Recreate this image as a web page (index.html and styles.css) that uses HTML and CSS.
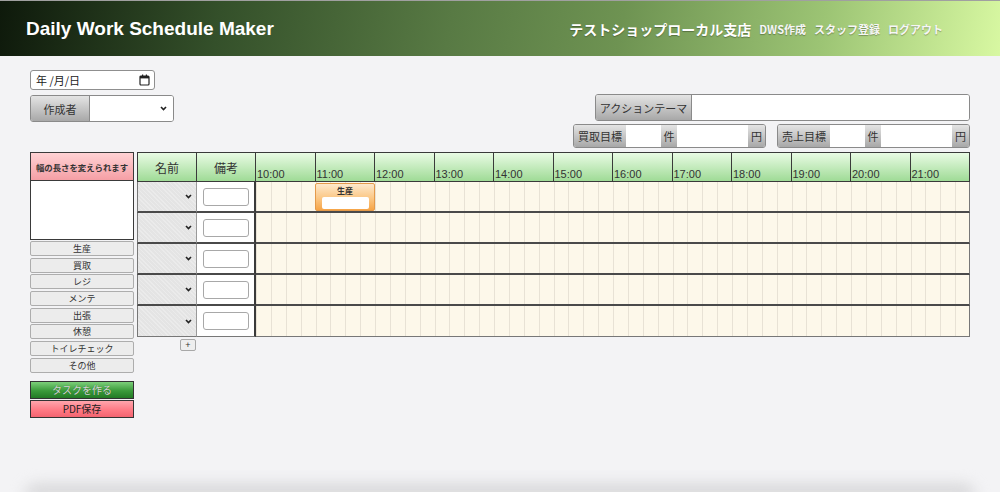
FILE: index.html
```html
<!DOCTYPE html>
<html lang="ja">
<head>
<meta charset="utf-8">
<title>Daily Work Schedule Maker</title>
<link rel="stylesheet" href="styles.css">
</head>
<body>
<div class="page">
  <header class="topbar">
    <h1 class="title">Daily Work Schedule Maker</h1>
    <nav class="nav">
      <span class="shop">テストショップローカル支店</span>
      <a class="nav-link" href="#">DWS作成</a>
      <a class="nav-link" href="#">スタッフ登録</a>
      <a class="nav-link" href="#">ログアウト</a>
    </nav>
  </header>

  <main class="content">
    <div class="controls">
      <div class="left-controls">
        <div class="date-field">
          <span>年 /月/日</span>
          <svg class="cal" width="11" height="12" viewBox="0 0 11 12"><rect x="1" y="2" width="9" height="9" rx="1" fill="none" stroke="#222" stroke-width="1.2"/><rect x="1" y="2" width="9" height="2.4" fill="#222"/><rect x="3" y="0.5" width="1.2" height="2" fill="#222"/><rect x="6.8" y="0.5" width="1.2" height="2" fill="#222"/></svg>
        </div>
        <div class="creator">
          <span class="tag creator-tag">作成者</span>
          <div class="select-box">
            <svg width="7" height="5" viewBox="0 0 7 5"><path d="M1 1 L3.5 3.6 L6 1" fill="none" stroke="#222" stroke-width="1.6"/></svg>
          </div>
        </div>
      </div>

      <div class="right-controls">
        <div class="theme">
          <span class="tag theme-tag">アクションテーマ</span>
          <div class="field"></div>
        </div>
        <div class="targets">
          <div class="target">
            <span class="tag t-label">買取目標</span>
            <div class="field t-count"></div>
            <span class="tag t-unit">件</span>
            <div class="field t-amount"></div>
            <span class="tag t-yen">円</span>
          </div>
          <div class="target">
            <span class="tag t-label">売上目標</span>
            <div class="field t-count"></div>
            <span class="tag t-unit">件</span>
            <div class="field t-amount"></div>
            <span class="tag t-yen">円</span>
          </div>
        </div>
      </div>
    </div>

    <div class="workspace">
      <aside class="palette">
        <div class="palette-head">幅の長さを変えられます</div>
        <div class="palette-area"></div>
        <div class="task-list">
          <div class="task-btn">生産</div>
          <div class="task-btn">買取</div>
          <div class="task-btn">レジ</div>
          <div class="task-btn">メンテ</div>
          <div class="task-btn">出張</div>
          <div class="task-btn">休憩</div>
          <div class="task-btn">トイレチェック</div>
          <div class="task-btn">その他</div>
        </div>
        <div class="actions">
          <div class="make-btn">タスクを作る</div>
          <div class="pdf-btn">PDF保存</div>
        </div>
      </aside>

      <section class="schedule">
        <div class="grid">
          <div class="hcell first">名前</div>
          <div class="hcell">備考</div>
          <div class="hcell hours">
            <div class="hour">10:00</div>
            <div class="hour">11:00</div>
            <div class="hour">12:00</div>
            <div class="hour">13:00</div>
            <div class="hour">14:00</div>
            <div class="hour">15:00</div>
            <div class="hour">16:00</div>
            <div class="hour">17:00</div>
            <div class="hour">18:00</div>
            <div class="hour">19:00</div>
            <div class="hour">20:00</div>
            <div class="hour last">21:00</div>
          </div>

          <div class="ncell"><svg width="7" height="5" viewBox="0 0 7 5"><path d="M1 1 L3.5 3.6 L6 1" fill="none" stroke="#222" stroke-width="1.6"/></svg></div>
          <div class="bcell"><div class="memo"></div></div>
          <div class="tcell">
            <div class="task-block"><span class="block-label">生産</span><div class="block-input"></div></div>
          </div>

          <div class="ncell"><svg width="7" height="5" viewBox="0 0 7 5"><path d="M1 1 L3.5 3.6 L6 1" fill="none" stroke="#222" stroke-width="1.6"/></svg></div>
          <div class="bcell"><div class="memo"></div></div>
          <div class="tcell"></div>

          <div class="ncell"><svg width="7" height="5" viewBox="0 0 7 5"><path d="M1 1 L3.5 3.6 L6 1" fill="none" stroke="#222" stroke-width="1.6"/></svg></div>
          <div class="bcell"><div class="memo"></div></div>
          <div class="tcell"></div>

          <div class="ncell"><svg width="7" height="5" viewBox="0 0 7 5"><path d="M1 1 L3.5 3.6 L6 1" fill="none" stroke="#222" stroke-width="1.6"/></svg></div>
          <div class="bcell"><div class="memo"></div></div>
          <div class="tcell"></div>

          <div class="ncell lastrow"><svg width="7" height="5" viewBox="0 0 7 5"><path d="M1 1 L3.5 3.6 L6 1" fill="none" stroke="#222" stroke-width="1.6"/></svg></div>
          <div class="bcell lastrow"><div class="memo"></div></div>
          <div class="tcell lastrow"></div>
        </div>
        <div class="add-row">+</div>
      </section>
    </div>
  </main>

  <div class="page-foot"></div>
</div>
</body>
</html>
```

FILE: styles.css
```css
* { box-sizing: border-box; }

body {
  margin: 0;
  background: #f3f3f5;
  font-family: "Liberation Sans", "Noto Sans CJK JP", sans-serif;
  color: #333;
}

.page {
  height: 492px;
  display: flex;
  flex-direction: column;
  overflow: hidden;
}

/* header */
.topbar {
  height: 56px;
  flex: none;
  display: flex;
  align-items: center;
  justify-content: space-between;
  padding: 0 57px 0 26px;
  border-top: 1px solid #a0a0a0;
  background: linear-gradient(100deg, #0e190b 0%, #34502a 22%, #587a44 45%, #6e9352 62%, #9cc474 82%, #d8f8a2 100%);
}

.title {
  margin: 0;
  font-family: "Liberation Sans", sans-serif;
  font-size: 19px;
  font-weight: bold;
  color: #fff;
}

.nav {
  display: flex;
  align-items: center;
  gap: 8px;
  font-family: "Noto Sans CJK JP", "Liberation Sans", sans-serif;
  font-weight: bold;
  color: #fff;
  text-shadow: 0 1px 1px rgba(0, 0, 0, 0.3);
}

.shop { font-size: 14px; }

.nav-link {
  font-size: 11px;
  color: #f6f6f6;
  text-decoration: none;
}

/* controls */
.content { padding: 14px 30px 0; }

.controls {
  display: flex;
  justify-content: space-between;
  align-items: flex-start;
}

.left-controls {
  display: flex;
  flex-direction: column;
  align-items: flex-start;
  gap: 5px;
}

.date-field {
  width: 125px;
  height: 20px;
  border: 1px solid #8f8f8f;
  border-radius: 3px;
  background: #fff;
  display: flex;
  align-items: center;
  justify-content: space-between;
  padding: 0 4px 0 5px;
  font-family: "Noto Sans CJK JP", sans-serif;
  font-size: 11px;
  color: #222;
}

.tag {
  background: linear-gradient(#e4e4e4, #a8a8a8);
  display: flex;
  align-items: center;
  justify-content: center;
  font-family: "Noto Sans CJK JP", sans-serif;
  font-size: 11px;
  color: #333;
}

.field { background: #fff; }

.creator {
  display: flex;
  width: 144px;
  height: 27px;
  border: 1px solid #8a8a8a;
  border-radius: 3px;
  overflow: hidden;
}

.creator-tag {
  width: 59px;
  border-right: 1px solid #8a8a8a;
}

.select-box {
  flex: 1;
  background: #fff;
  display: flex;
  align-items: center;
  justify-content: flex-end;
  padding-right: 6px;
}

.right-controls {
  margin-top: 24px;
  display: flex;
  flex-direction: column;
  align-items: flex-end;
  gap: 3px;
}

.theme {
  display: flex;
  width: 375px;
  height: 27px;
  border: 1px solid #8a8a8a;
  border-radius: 3px;
  overflow: hidden;
}

.theme-tag {
  width: 96px;
  border-right: 1px solid #8a8a8a;
}

.theme .field { flex: 1; }

.targets {
  display: flex;
  gap: 11px;
}

.target {
  display: flex;
  height: 24px;
  border: 1px solid #8a8a8a;
  border-radius: 3px;
  overflow: hidden;
}

.t-label { width: 52px; }
.t-count { width: 35px; }
.t-unit { width: 16px; }
.t-amount { width: 71px; }
.t-yen { width: 17px; }

/* workspace */
.workspace {
  display: flex;
  align-items: flex-start;
  gap: 3px;
  margin-top: 4px;
}

.palette {
  width: 104px;
  flex: none;
}

.palette-head {
  height: 29px;
  border: 1px solid #3a3a3a;
  background: linear-gradient(#ffd2d4, #f59fa5);
  display: flex;
  align-items: center;
  justify-content: center;
  font-family: "Noto Sans CJK JP", sans-serif;
  font-size: 8.4px;
  font-weight: bold;
  color: #333;
  white-space: nowrap;
}

.palette-area {
  height: 59px;
  background: #fff;
  border: 1px solid #3a3a3a;
  border-top: none;
}

.task-list {
  display: flex;
  flex-direction: column;
  gap: 1.7px;
  margin-top: 1px;
}

.task-btn {
  height: 15px;
  border: 1px solid #adadad;
  border-radius: 2px;
  background: #ececec;
  display: flex;
  align-items: center;
  justify-content: center;
  font-family: "Noto Sans CJK JP", sans-serif;
  font-size: 9px;
  color: #333;
}

.actions {
  margin-top: 8px;
  display: flex;
  flex-direction: column;
  gap: 1px;
}

.make-btn,
.pdf-btn {
  height: 18px;
  border: 1px solid #333;
  display: flex;
  align-items: center;
  justify-content: center;
  font-family: "Noto Sans CJK JP", sans-serif;
  font-size: 10px;
}

.make-btn {
  background: linear-gradient(#7ccf7a, #3a9a3a 55%, #237a25);
  color: #d6d6d6;
  text-shadow: 0 0 1px rgba(0, 0, 0, 0.4);
}

.pdf-btn {
  background: linear-gradient(#ffa5ac, #ff7a85 55%, #f36470);
  color: #222;
}

/* schedule */
.schedule { width: 833px; flex: none; }

.grid {
  display: grid;
  grid-template-columns: 60px 59px 714px;
}

.hcell {
  height: 30px;
  background: linear-gradient(#e9fbe4, #9fdb96);
  border-top: 1px solid #3a3a3a;
  border-bottom: 1px solid #3a3a3a;
  border-right: 1px solid #3a3a3a;
  display: flex;
  align-items: center;
  justify-content: center;
  font-family: "Noto Sans CJK JP", sans-serif;
  font-size: 12px;
  color: #333;
}

.hcell.first { border-left: 1px solid #3a3a3a; }

.hcell.hours {
  display: grid;
  grid-template-columns: repeat(12, 1fr);
  align-items: stretch;
  justify-content: stretch;
  border-right: none;
  background: none;
}

.hour {
  background: linear-gradient(#e9fbe4, #9fdb96);
  border-right: 1px solid #3a3a3a;
  display: flex;
  align-items: flex-end;
  padding-left: 1px;
  font-family: "Liberation Sans", sans-serif;
  font-size: 11px;
  color: #333;
  line-height: 13px;
}

.ncell,
.bcell,
.tcell {
  height: 31px;
  border-bottom: 2px solid #4a4a4a;
}

.ncell {
  background-color: #e4e4e4;
  background-image: repeating-linear-gradient(45deg, rgba(255,255,255,0.25) 0 1px, transparent 1px 3px);
  border-left: 1px solid #777;
  border-right: 1px solid #9a9a9a;
  display: flex;
  align-items: center;
  justify-content: flex-end;
  padding-right: 4px;
}

.bcell {
  background: #fff;
  border-right: 2px solid #3a3a3a;
  display: flex;
  align-items: center;
  justify-content: center;
}

.memo {
  width: 46px;
  height: 18px;
  border: 1px solid #a8a8a8;
  border-radius: 3px;
  background: #fff;
}

.tcell {
  border-right: 1px solid #777;
  background-color: #fdf8ea;
  background-image: repeating-linear-gradient(to right, #e8e2d5 0 1px, transparent 1px 14.875px);
  display: grid;
  grid-template-columns: repeat(48, 1fr);
}

.lastrow { border-bottom: 1px solid #777; }

.task-block {
  grid-column: 5 / span 4;
  margin-top: 1px;
  background: linear-gradient(#fde8cc, #fbc784 55%, #f6a548);
  border: 1px solid #e49a4a;
  border-radius: 2px;
  display: flex;
  flex-direction: column;
  align-items: center;
  padding-top: 1px;
}

.block-label {
  font-family: "Noto Sans CJK JP", sans-serif;
  font-size: 8px;
  font-weight: bold;
  line-height: 11px;
  color: #333;
}

.block-input {
  width: 47px;
  height: 12px;
  margin-top: 1px;
  background: #fff;
  border-radius: 2px;
}

.add-row {
  margin: 2px 0 0 43px;
  width: 16px;
  height: 12px;
  border: 1px solid #a8a8a8;
  border-radius: 2px;
  background: #eee;
  font-size: 9px;
  line-height: 10px;
  text-align: center;
  color: #333;
}

.page-foot {
  margin: auto 24px -6px;
  height: 14px;
  flex: none;
  border-radius: 14px 14px 0 0;
  background: #d6d6d8;
  filter: blur(7px);
}
```
